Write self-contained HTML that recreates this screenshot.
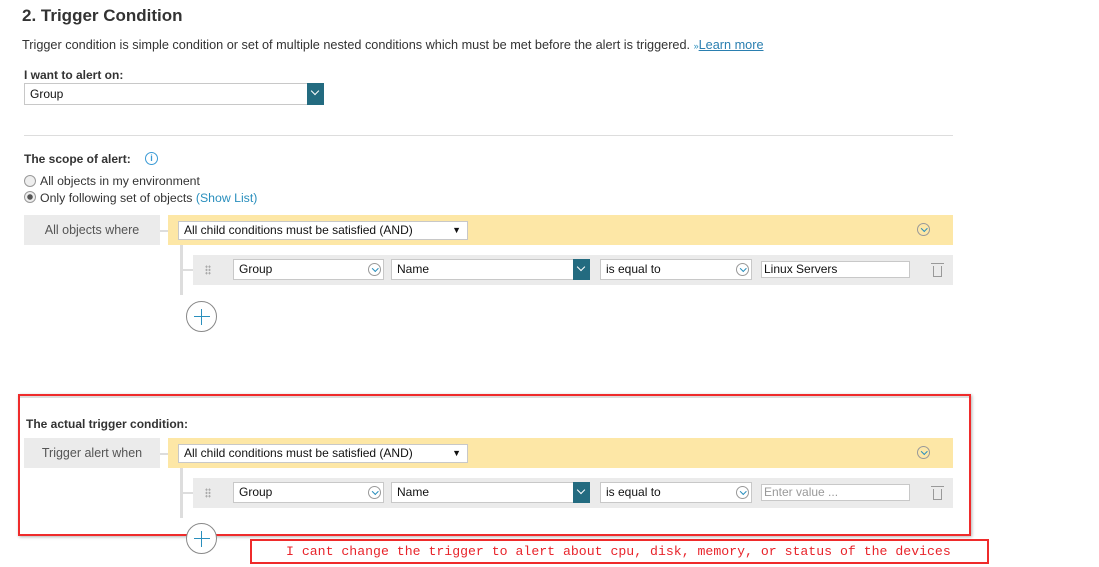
<!DOCTYPE html>
<html><head><style>
*{box-sizing:border-box;margin:0;padding:0}
body{width:1099px;height:567px;background:#fff;position:relative;overflow:hidden;font-family:"Liberation Sans",Arial,sans-serif;color:#333}
.a{position:absolute;white-space:nowrap}
.sel{position:absolute;background:#fff;border:1px solid #c8c8c8;font-size:12px;color:#111;padding-left:5px;line-height:17px}
.gray{position:absolute;background:#ebebeb}
.yel{position:absolute;background:#fde7a6}
.circ{position:absolute;width:13px;height:13px;border:1px solid #999;border-radius:50%}
.circ:after{content:"";position:absolute;left:3.5px;top:2px;width:3.5px;height:3.5px;border-right:1px solid #2a8fbd;border-bottom:1px solid #2a8fbd;transform:rotate(45deg)}
.tbtn{position:absolute;background:#236b80;width:17px}
.tbtn:after{content:"";position:absolute;left:5px;top:5px;width:5px;height:5px;border-right:1px solid #fff;border-bottom:1px solid #fff;transform:rotate(45deg)}
.plus{position:absolute;width:31px;height:31px;border:1px solid #888;border-radius:50%;background:#fff}
.plus:before{content:"";position:absolute;left:14px;top:7px;width:1px;height:16px;background:#2a8fbd}
.plus:after{content:"";position:absolute;left:7px;top:14px;width:16px;height:1px;background:#2a8fbd}
.dots{position:absolute;width:6px;height:10px;background:radial-gradient(circle,#aaa 1px,transparent 1.2px) 0 0/3px 3.3px}
.trash{position:absolute;width:9px;height:11px;border:1px solid #999;border-top:none}
.trash:before{content:"";position:absolute;left:-3px;top:-3px;width:13px;height:1px;background:#999}
.lbl{font-size:12.5px;color:#555;text-align:center;line-height:30px}
</style></head><body>
<div class="a" style="left:22px;top:6px;font-size:17px;font-weight:bold;color:#333">2. Trigger Condition</div>
<div class="a" style="left:22px;top:38px;font-size:12.7px;color:#333">Trigger condition is simple condition or set of multiple nested conditions which must be met before the alert is triggered. <span style="color:#2a8fbd;font-size:9px">»</span><span style="color:#2a7fb0;text-decoration:underline">Learn more</span></div>
<div class="a" style="left:24px;top:68px;font-size:12px;font-weight:bold">I want to alert on:</div>
<div class="sel" style="left:24px;top:83px;width:300px;height:22px;line-height:20px">Group</div>
<div class="tbtn" style="left:307px;top:83px;height:22px"></div>
<div class="a" style="left:24px;top:135px;width:929px;height:1px;background:#ddd"></div>
<div class="a" style="left:24px;top:152px;font-size:12px;font-weight:bold">The scope of alert:</div>
<div class="a" style="left:145px;top:152px;width:13px;height:13px;border:1px solid #3a9ad5;border-radius:50%;font-size:9px;color:#3a9ad5;text-align:center;line-height:11px;font-weight:bold">i</div>
<div class="a" style="left:24px;top:175px;width:12px;height:12px;border:1px solid #999;border-radius:50%;background:#eee"></div>
<div class="a" style="left:40px;top:174px;font-size:12.3px">All objects in my environment</div>
<div class="a" style="left:24px;top:191px;width:12px;height:12px;border:1px solid #999;border-radius:50%;background:radial-gradient(circle,#555 2.5px,#eee 3px)"></div>
<div class="a" style="left:40px;top:191px;font-size:12.3px">Only following set of objects <span style="color:#2a8fbd">(Show List)</span></div>

<!-- block 1 -->
<div class="gray lbl" style="left:24px;top:215px;width:136px;height:30px">All objects where</div>
<div class="a" style="left:160px;top:230px;width:8px;height:2px;background:#ddd"></div>
<div class="yel" style="left:168px;top:215px;width:785px;height:30px"></div>
<div class="sel" style="left:178px;top:221px;width:290px;height:19px">All child conditions must be satisfied (AND)<span style="position:absolute;right:6px;font-size:9px">▼</span></div>
<div class="circ" style="left:917px;top:223px"></div>
<div class="a" style="left:180px;top:245px;width:3px;height:50px;background:#ddd"></div>
<div class="a" style="left:183px;top:269px;width:10px;height:2px;background:#ddd"></div>
<div class="gray" style="left:193px;top:255px;width:760px;height:30px"></div>
<div class="dots" style="left:205px;top:265px"></div>
<div class="sel" style="left:233px;top:259px;width:151px;height:21px;line-height:19px">Group</div><div class="circ" style="left:368px;top:263px"></div>
<div class="sel" style="left:391px;top:259px;width:198px;height:21px;line-height:19px">Name</div><div class="tbtn" style="left:573px;top:259px;height:21px"></div>
<div class="sel" style="left:600px;top:259px;width:152px;height:21px;line-height:19px">is equal to</div><div class="circ" style="left:736px;top:263px"></div>
<div class="sel" style="left:761px;top:261px;width:149px;height:17px;line-height:15px;padding-left:2px">Linux Servers</div>
<div class="trash" style="left:933px;top:266px"></div>
<div class="plus" style="left:186px;top:301px"></div>

<!-- block 2 -->
<div class="a" style="left:18px;top:394px;width:953px;height:142px;border:2px solid #ef2b2b;box-shadow:1px 1px 3px rgba(0,0,0,.3)"></div>
<div class="a" style="left:20px;top:396px;width:949px;height:2px;background:#ddd"></div>
<div class="a" style="left:26px;top:417px;font-size:12px;font-weight:bold">The actual trigger condition:</div>
<div class="gray lbl" style="left:24px;top:438px;width:136px;height:30px">Trigger alert when</div>
<div class="a" style="left:160px;top:453px;width:8px;height:2px;background:#ddd"></div>
<div class="yel" style="left:168px;top:438px;width:785px;height:30px"></div>
<div class="sel" style="left:178px;top:444px;width:290px;height:19px">All child conditions must be satisfied (AND)<span style="position:absolute;right:6px;font-size:9px">▼</span></div>
<div class="circ" style="left:917px;top:446px"></div>
<div class="a" style="left:180px;top:468px;width:3px;height:50px;background:#ddd"></div>
<div class="a" style="left:183px;top:492px;width:10px;height:2px;background:#ddd"></div>
<div class="gray" style="left:193px;top:478px;width:760px;height:30px"></div>
<div class="dots" style="left:205px;top:488px"></div>
<div class="sel" style="left:233px;top:482px;width:151px;height:21px;line-height:19px">Group</div><div class="circ" style="left:368px;top:486px"></div>
<div class="sel" style="left:391px;top:482px;width:198px;height:21px;line-height:19px">Name</div><div class="tbtn" style="left:573px;top:482px;height:21px"></div>
<div class="sel" style="left:600px;top:482px;width:152px;height:21px;line-height:19px">is equal to</div><div class="circ" style="left:736px;top:486px"></div>
<div class="sel" style="left:761px;top:484px;width:149px;height:17px;line-height:15px;padding-left:2px;color:#999">Enter value ...</div>
<div class="trash" style="left:933px;top:489px"></div>
<div class="plus" style="left:186px;top:523px"></div>
<div class="a" style="left:250px;top:539px;width:739px;height:25px;border:2px solid #ef2b2b;background:#fff;font-family:'Liberation Mono',monospace;font-size:13.2px;color:#e8242b;line-height:21px;padding-left:34px">I cant change the trigger to alert about cpu, disk, memory, or status of the devices</div>
</body></html>
